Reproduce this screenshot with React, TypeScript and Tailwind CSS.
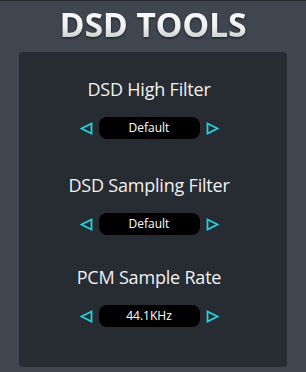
import { ReactNode } from "react";

function ArrowLeft() {
  return (
    <svg width="13" height="13" viewBox="0 0 13 13" fill="none">
      <path d="M11.5 1.5 L1.5 6.5 L11.5 11.5 Z" stroke="#1fd4e0" strokeWidth="1.8" strokeLinejoin="miter" />
    </svg>
  );
}

function ArrowRight() {
  return (
    <svg width="13" height="13" viewBox="0 0 13 13" fill="none">
      <path d="M1.5 1.5 L11.5 6.5 L1.5 11.5 Z" stroke="#1fd4e0" strokeWidth="1.8" strokeLinejoin="miter" />
    </svg>
  );
}

function Selector({ label, value, className }: { label: string; value: ReactNode; className?: string }) {
  return (
    <div className={`flex flex-col items-center ${className ?? ""}`}>
      <div className="text-[18px] leading-[24px] text-[#f2f2f2] font-['Open_Sans',sans-serif] tracking-[-0.2px]">{label}</div>
      <div className="mt-[16px] flex items-center gap-[6px]">
        <ArrowLeft />
        <div className="w-[101px] h-[22px] rounded-[8px] bg-black flex items-center justify-center text-[12px] text-white font-['Open_Sans',sans-serif]">
          {value}
        </div>
        <ArrowRight />
      </div>
    </div>
  );
}

export default function App() {
  return (
    <div className="w-[306px] h-[372px] bg-[#3f464f] border-t border-[#25292e] flex flex-col font-['Open_Sans',sans-serif]">
      <div className="h-[51px] flex justify-center">
        <h1
          className="text-[34px] leading-[46px] font-bold bg-gradient-to-b from-white via-[#f0f0f0] to-[#a9aaab] bg-clip-text text-transparent drop-shadow-[0_1px_1px_rgba(0,0,0,0.6)] tracking-[-0.3px]"
        >
          DSD TOOLS
        </h1>
      </div>
      <div className="mx-[19px] h-[315px] rounded-[4px] bg-[#272b32] pt-[25px] pr-[8px]">
        <Selector label="DSD High Filter" value="Default" />
        <Selector label="DSD Sampling Filter" value="Default" className="mt-[34px]" />
        <Selector label="PCM Sample Rate" value="44.1KHz" className="mt-[30px]" />
      </div>
    </div>
  );
}
